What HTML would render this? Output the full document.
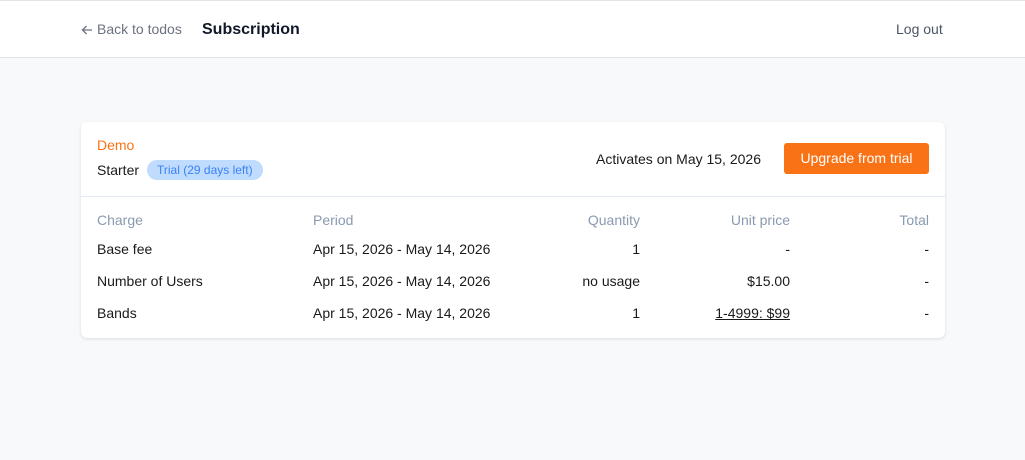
<!DOCTYPE html>
<html><head><style>
*{margin:0;padding:0;box-sizing:border-box}
body{width:1025px;height:460px;background:#f8f9fb;font-family:"Liberation Sans",sans-serif;font-size:14px;color:#1a1a1a;position:relative;overflow:hidden}
.hdr{position:absolute;left:0;top:0;width:1025px;height:58px;background:#fff;border-top:1px solid #e2e4e8;border-bottom:1px solid #e2e4e8}
.abs{position:absolute;white-space:nowrap}
.card{position:absolute;left:81px;top:122px;width:864px;height:216px;background:#fff;border-radius:6px;box-shadow:0 1px 3px rgba(0,0,0,.12)}
.gray{color:#8a9ab0}
.r{text-align:right}
</style></head><body>
<div class="hdr">
<svg class="abs" style="left:81px;top:23px" width="12" height="12" viewBox="0 0 12 12"><path d="M11 6H1.5M5.5 2L1.5 6l4 4" fill="none" stroke="#6b7280" stroke-width="1.3"/></svg>
<div class="abs" style="left:97px;top:20px;color:#6b7280;font-size:14px">Back to todos</div>
<div class="abs" style="left:202px;top:20px;font-size:16px;font-weight:bold;color:#111827">Subscription</div>
<div class="abs" style="left:896px;top:20px;color:#4b5563">Log out</div>
</div>
<div class="card">
<div class="abs" style="left:16px;top:15px;color:#f97316">Demo</div>
<div class="abs" style="left:16px;top:40px">Starter</div>
<div class="abs" style="left:66px;top:38px;height:20px;padding:0 10px;line-height:20px;background:#bfdbfe;color:#3b82f6;border-radius:10px;font-size:12px">Trial (29 days left)</div>
<div class="abs" style="left:515px;top:29px">Activates on May 15, 2026</div>
<div class="abs" style="left:703px;top:21px;width:145px;height:31px;background:#f97316;color:#fff;border-radius:3px;text-align:center;line-height:31px">Upgrade from trial</div>
<div class="abs" style="left:0;top:74px;width:864px;height:1px;background:#e2e8f0"></div>
<div class="abs gray" style="left:16px;top:90px">Charge</div>
<div class="abs gray" style="left:232px;top:90px">Period</div>
<div class="abs gray r" style="left:459px;width:100px;top:90px">Quantity</div>
<div class="abs gray r" style="left:609px;width:100px;top:90px">Unit price</div>
<div class="abs gray r" style="left:748px;width:100px;top:90px">Total</div>

<div class="abs" style="left:16px;top:119px">Base fee</div>
<div class="abs" style="left:232px;top:119px">Apr 15, 2026 - May 14, 2026</div>
<div class="abs r" style="left:459px;width:100px;top:119px">1</div>
<div class="abs r" style="left:609px;width:100px;top:119px">-</div>
<div class="abs r" style="left:748px;width:100px;top:119px">-</div>

<div class="abs" style="left:16px;top:151px">Number of Users</div>
<div class="abs" style="left:232px;top:151px">Apr 15, 2026 - May 14, 2026</div>
<div class="abs r" style="left:459px;width:100px;top:151px">no usage</div>
<div class="abs r" style="left:609px;width:100px;top:151px">$15.00</div>
<div class="abs r" style="left:748px;width:100px;top:151px">-</div>

<div class="abs" style="left:16px;top:183px">Bands</div>
<div class="abs" style="left:232px;top:183px">Apr 15, 2026 - May 14, 2026</div>
<div class="abs r" style="left:459px;width:100px;top:183px">1</div>
<div class="abs r" style="left:609px;width:100px;top:183px;text-decoration:underline">1-4999: $99</div>
<div class="abs r" style="left:748px;width:100px;top:183px">-</div>
</div>
</body></html>
